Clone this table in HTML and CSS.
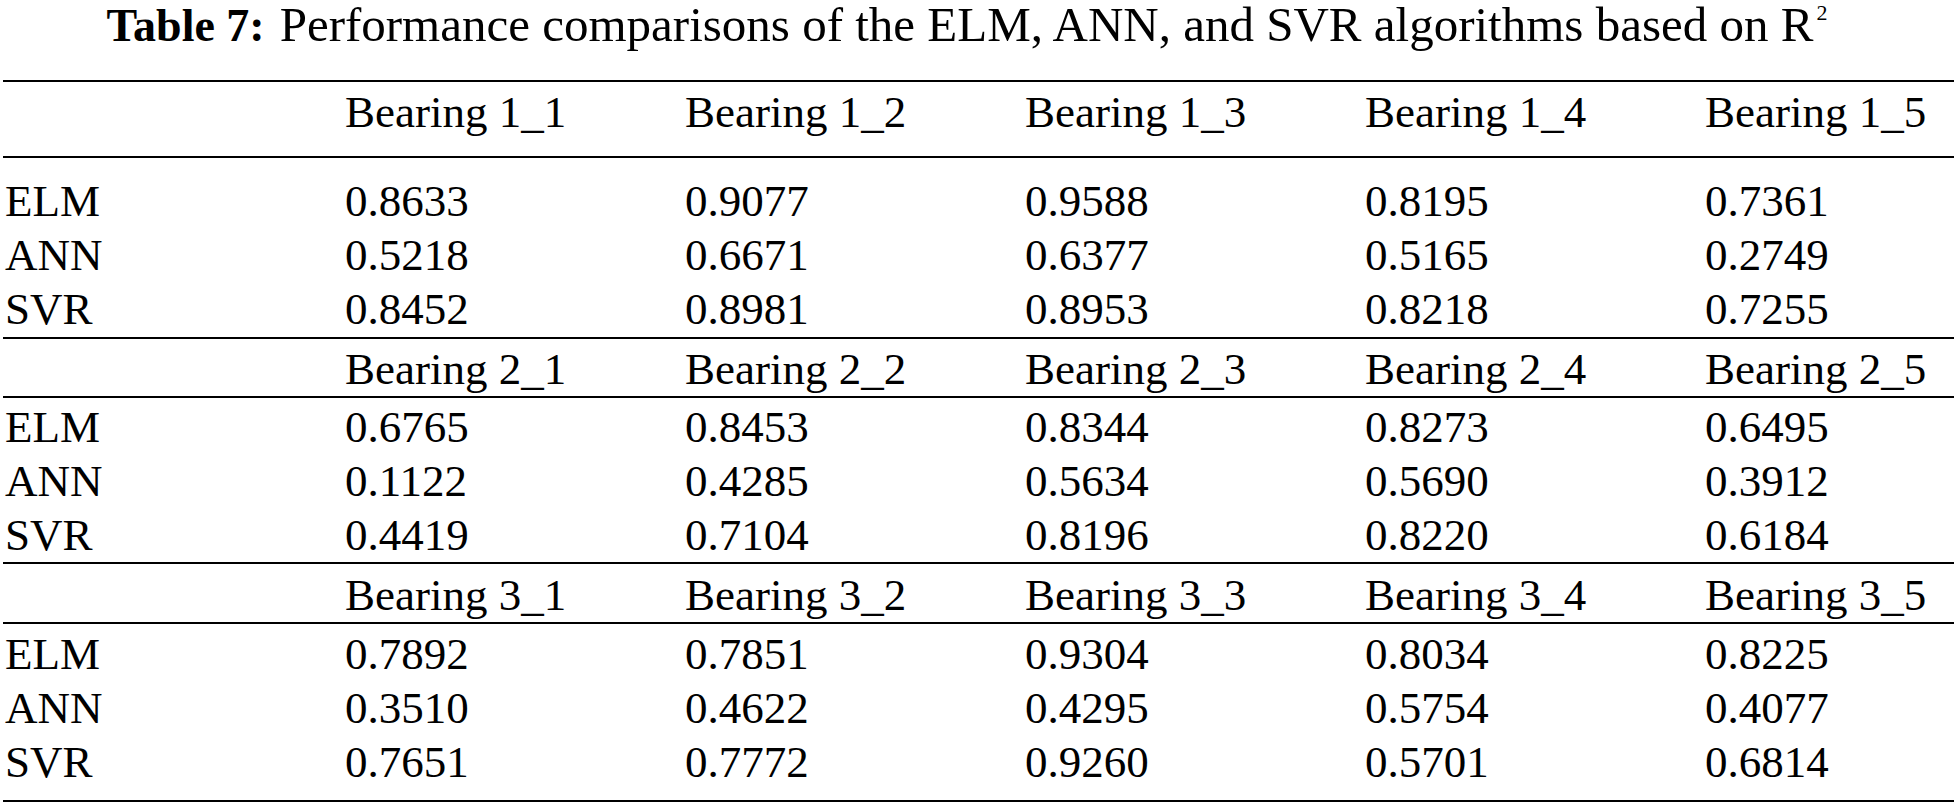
FILE: index.html
```html
<!DOCTYPE html>
<html lang="en">
<head>
<meta charset="utf-8">
<title>Table 7</title>
<link rel="stylesheet" href="styles.css">
</head>
<body>
<div class="caption"><span class="cap-label">Table 7:</span><span class="cap-text">Performance comparisons of the ELM, ANN, and SVR algorithms based on R<sup class="sq">2</sup></span></div>
<table class="results">
  <colgroup>
    <col class="c-label"><col class="c-val"><col class="c-val"><col class="c-val"><col class="c-val"><col class="c-last">
  </colgroup>
  <tbody>
    <tr class="head first"><td></td><td>Bearing 1_1</td><td>Bearing 1_2</td><td>Bearing 1_3</td><td>Bearing 1_4</td><td>Bearing 1_5</td></tr>
    <tr class="row top1"><td>ELM</td><td>0.8633</td><td>0.9077</td><td>0.9588</td><td>0.8195</td><td>0.7361</td></tr>
    <tr class="row"><td>ANN</td><td>0.5218</td><td>0.6671</td><td>0.6377</td><td>0.5165</td><td>0.2749</td></tr>
    <tr class="row end end1"><td>SVR</td><td>0.8452</td><td>0.8981</td><td>0.8953</td><td>0.8218</td><td>0.7255</td></tr>

    <tr class="head h2"><td></td><td>Bearing 2_1</td><td>Bearing 2_2</td><td>Bearing 2_3</td><td>Bearing 2_4</td><td>Bearing 2_5</td></tr>
    <tr class="row top2"><td>ELM</td><td>0.6765</td><td>0.8453</td><td>0.8344</td><td>0.8273</td><td>0.6495</td></tr>
    <tr class="row"><td>ANN</td><td>0.1122</td><td>0.4285</td><td>0.5634</td><td>0.5690</td><td>0.3912</td></tr>
    <tr class="row end"><td>SVR</td><td>0.4419</td><td>0.7104</td><td>0.8196</td><td>0.8220</td><td>0.6184</td></tr>

    <tr class="head h3"><td></td><td>Bearing 3_1</td><td>Bearing 3_2</td><td>Bearing 3_3</td><td>Bearing 3_4</td><td>Bearing 3_5</td></tr>
    <tr class="row top3"><td>ELM</td><td>0.7892</td><td>0.7851</td><td>0.9304</td><td>0.8034</td><td>0.8225</td></tr>
    <tr class="row"><td>ANN</td><td>0.3510</td><td>0.4622</td><td>0.4295</td><td>0.5754</td><td>0.4077</td></tr>
    <tr class="row end end3"><td>SVR</td><td>0.7651</td><td>0.7772</td><td>0.9260</td><td>0.5701</td><td>0.6814</td></tr>
  </tbody>
</table>
</body>
</html>
```

FILE: styles.css
```css
html, body {
  margin: 0;
  padding: 0;
  background: #ffffff;
}

body {
  width: 1954px;
  color: #000000;
  font-family: "Liberation Serif", "Times New Roman", serif;
  font-size: 45px;
}

.caption {
  height: 40px;
  padding-top: 5px;
  line-height: 40px;
  text-align: center;
  white-space: nowrap;
  padding-right: 20px;
}

.cap-label {
  font-weight: bold;
  font-size: 46px;
  margin-right: 15px;
}

.cap-text {
  font-size: 49px;
}

.sq {
  font-size: 22px;
  line-height: 0;
  vertical-align: 21px;
  margin-left: 3px;
}

.results {
  margin: 35px 0 0 3px;
  width: 1951px;
  table-layout: fixed;
  border-collapse: separate;
  border-spacing: 0;
}

.c-label { width: 342px; }
.c-val { width: 340px; }
.c-last { width: 249px; }

.results td {
  padding: 0;
  line-height: 54px;
  height: 54px;
  vertical-align: top;
  white-space: nowrap;
  text-align: left;
}

.results td:first-child {
  padding-left: 2px;
}

.head td {
  border-bottom: 2px solid #000;
}

.head.first td {
  border-top: 2px solid #000;
  padding-top: 3px;
  padding-bottom: 17px;
}

.head.h2 td { padding-top: 3px; }
.head.h3 td { padding-top: 4px; }

.row.top1 td { padding-top: 16px; }
.row.top2 td { padding-top: 2px; }
.row.top3 td { padding-top: 3px; }

.row.end td {
  border-bottom: 2px solid #000;
}

.row.end1 td { padding-bottom: 1px; }
.row.end3 td { padding-bottom: 11px; }
```
